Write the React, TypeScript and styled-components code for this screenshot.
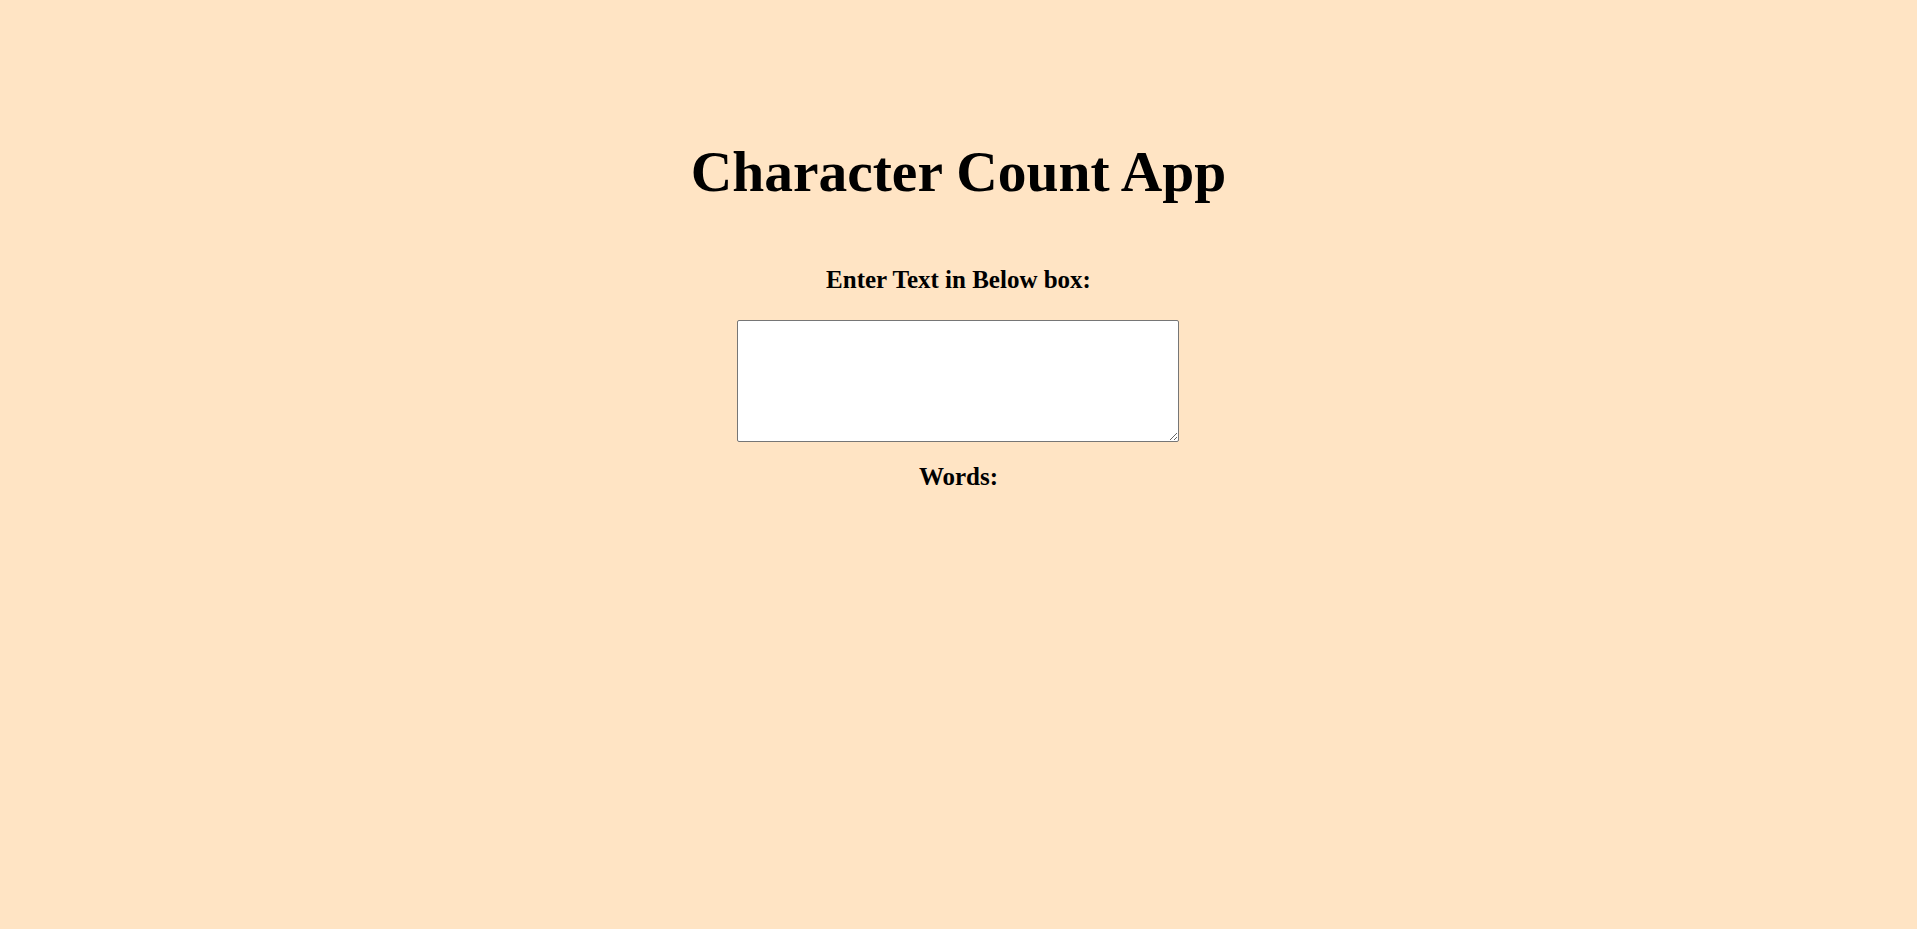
import React, { useState } from "react";
import styled, { createGlobalStyle } from "styled-components";

const Global = createGlobalStyle`
  html, body {
    margin: 0;
    padding: 0;
    background: #ffe4c4;
    font-family: "Liberation Serif", "Times New Roman", serif;
    color: #000;
  }
`;

const Page = styled.main`
  min-height: 929px;
  display: flex;
  flex-direction: column;
  align-items: center;
  padding-top: 138px;
  box-sizing: border-box;
`;

const Title = styled.h1`
  margin: 0;
  font-size: 57.5px;
  font-weight: bold;
  line-height: 67px;
`;

const Label = styled.h2`
  margin: 61px 0 0;
  font-size: 25px;
  font-weight: bold;
  line-height: 1.15;
`;

const TextBox = styled.textarea`
  margin: 25px 2px 0 0;
  width: 442px;
  height: 122px;
  box-sizing: border-box;
  border: 1px solid #767676;
  border-radius: 2px;
  background: #fff;
  padding: 2px;
  font-family: "Liberation Mono", monospace;
  font-size: 13px;
`;

const Count = styled.h2`
  margin: 21px 0 0;
  font-size: 25px;
  font-weight: bold;
  line-height: 1.15;
`;

export default function App() {
  const [text, setText] = useState("");
  const words = text.trim() ? text.trim().split(/\s+/).length : "";
  return (
    <>
      <Global />
      <Page>
        <Title>Character Count App</Title>
        <Label>Enter Text in Below box:</Label>
        <TextBox value={text} onChange={(e) => setText(e.target.value)} />
        <Count>Words: {words}</Count>
      </Page>
    </>
  );
}
